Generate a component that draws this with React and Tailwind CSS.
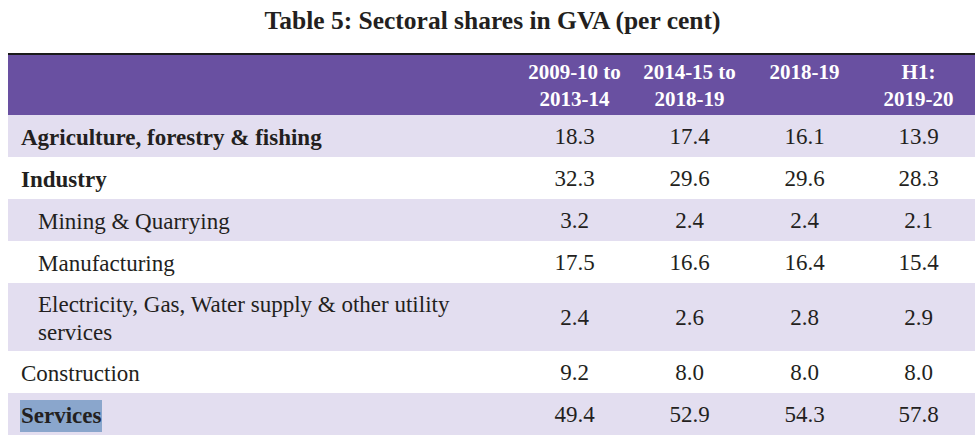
import React from "react";

const rows = [
  { label: "Agriculture, forestry & fishing", bold: true, vals: ["18.3", "17.4", "16.1", "13.9"] },
  { label: "Industry", bold: true, vals: ["32.3", "29.6", "29.6", "28.3"] },
  { label: "Mining & Quarrying", indent: true, vals: ["3.2", "2.4", "2.4", "2.1"] },
  { label: "Manufacturing", indent: true, vals: ["17.5", "16.6", "16.4", "15.4"] },
  { label: "Electricity, Gas, Water supply & other utility services", indent: true, tall: true, vals: ["2.4", "2.6", "2.8", "2.9"] },
  { label: "Construction", vals: ["9.2", "8.0", "8.0", "8.0"] },
  { label: "Services", bold: true, selected: true, vals: ["49.4", "52.9", "54.3", "57.8"] },
];

const heads = [
  ["2009-10 to", "2013-14"],
  ["2014-15 to", "2018-19"],
  ["2018-19", ""],
  ["H1:", "2019-20"],
];

export default function App() {
  return (
    <div className="w-[976px] h-[439px] bg-white text-[#231f20] overflow-hidden font-['Liberation_Serif','Times_New_Roman',serif]">
      <div className="h-[53px] flex justify-center pl-[9px] pt-[6px]">
        <h1 className="text-[25.5px] font-bold leading-[30px]">
          Table 5: Sectoral shares in GVA (per cent)
        </h1>
      </div>
      <div className="ml-[8px] w-[967px] border-t-2 border-[#1a1a1a]">
        <div className="grid grid-cols-[509px_115px_115px_115px_113px] bg-[#6950a1] h-[60px] text-white font-bold text-[21px] leading-[27px]">
          <div />
          {heads.map((h, i) => (
            <div key={i} className="flex flex-col items-center pt-[4px]">
              <span>{h[0]}</span>
              <span>{h[1]}</span>
            </div>
          ))}
        </div>
        {rows.map((r, i) => (
          <div
            key={i}
            className={`grid grid-cols-[509px_115px_115px_115px_113px] items-center pt-[3px] text-[23px] ${i % 2 === 0 ? "bg-[#e3def0]" : "bg-white"} ${r.tall ? "h-[68px]" : "h-[42px]"}`}
          >
            <div className={`${r.indent ? "pl-[30px]" : "pl-[13px]"} ${r.bold ? "font-bold" : ""} leading-[28px] pr-[40px]`}>
              {r.selected ? (
                <span className="inline-block bg-[#8aa6cc] h-[32px] leading-[32px] -ml-[1px] pl-[1px] pr-[1px]">{r.label}</span>
              ) : (
                r.label
              )}
            </div>
            {r.vals.map((v, j) => (
              <div key={j} className="text-center">{v}</div>
            ))}
          </div>
        ))}
      </div>
    </div>
  );
}
